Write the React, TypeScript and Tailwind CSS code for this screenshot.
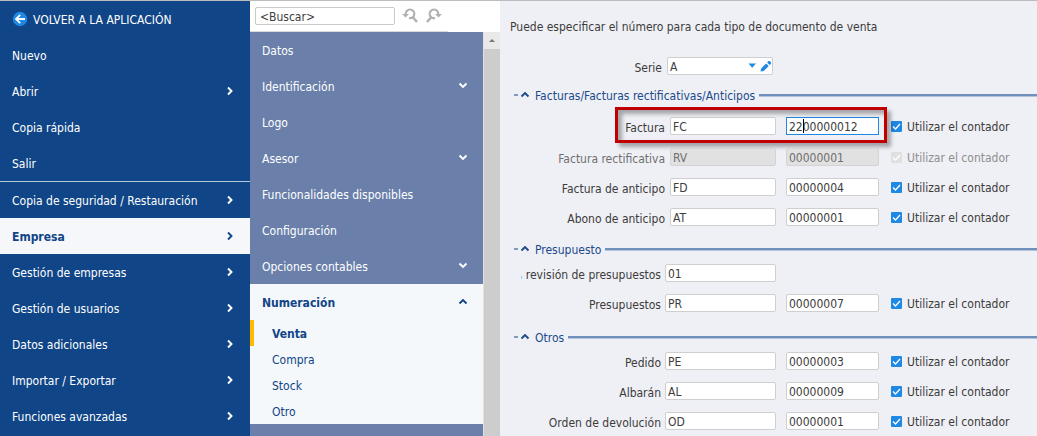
import { ReactNode } from "react";

function Chevron({ dir }: { dir: "right" | "down" | "up" }) {
  const d = {
    right: "M4 1.5 7.5 5 4 8.5",
    down: "M1.5 2.5 5 6 8.5 2.5",
    up: "M1.5 6.5 5 3 8.5 6.5",
  }[dir];
  return (
    <svg viewBox="0 0 10 10" className="h-[10px] w-[10px] shrink-0" fill="none" stroke="currentColor" strokeWidth="1.9" aria-hidden="true">
      <path d={d} />
    </svg>
  );
}

function MainItem({ label, arrow, active }: { label: string; arrow?: boolean; active?: boolean }) {
  return (
    <button
      className={
        active
          ? "flex h-9 w-full items-center justify-between bg-[#f5f7fa] pr-4 pl-3 text-left font-bold text-[#104587]"
          : "flex h-9 w-full items-center justify-between pr-4 pl-3 text-left text-white"
      }
    >
      <span className="pt-[2px]">{label}</span>
      {arrow && <Chevron dir="right" />}
    </button>
  );
}

function SubItem({ label, arrow }: { label: string; arrow?: boolean }) {
  return (
    <button className="flex h-9 w-full items-center justify-between pr-[15px] pl-3 text-left text-white">
      <span className="pt-[2px]">{label}</span>
      {arrow && <Chevron dir="down" />}
    </button>
  );
}

function SearchArrow({ flip, label }: { flip?: boolean; label: string }) {
  return (
    <button aria-label={label} className="h-4 w-4">
      <svg viewBox="0 0 16 16" className={flip ? "h-4 w-4 -scale-x-100" : "h-4 w-4"} fill="none" stroke="#b1b1b1">
        <path d="M3.8 6.5A4.3 4.3 0 1 1 7 10" strokeWidth="2.1" />
        <path d="M0 6H7L3.5 9.6Z" fill="#b1b1b1" stroke="none" />
        <path d="M10.6 9 15 14" strokeWidth="2.6" />
      </svg>
    </button>
  );
}

function Group({ title, children }: { title: string; children: ReactNode }) {
  return (
    <section>
      <button className="flex h-4 w-full items-center text-[#1a4a8c]">
        <span className="h-[2px] w-1 bg-[#7c9abf]" />
        <span className="mx-[2px] flex">
          <Chevron dir="up" />
        </span>
        <span className="mr-1 ml-[3px] pt-[2px] whitespace-nowrap">{title}</span>
        <span className="h-[3px] flex-1 border-b border-[#b4c5da] bg-[#6f90ba]" />
      </button>
      {children}
    </section>
  );
}

type RowProps = {
  label: string;
  code: string;
  number?: string;
  wide?: boolean;
  disabled?: boolean;
  highlight?: boolean;
  cut?: boolean;
};

function Row({ label, code, number, wide, disabled, highlight, cut }: RowProps) {
  const id = label.toLowerCase().replace(/ /g, "-");
  const box = disabled
    ? "h-[18px] rounded-[2px] border border-[#d3d3d3] bg-[#e1e1e1] px-[2px] pt-[2px] leading-[14px] text-[#6f6f6f]"
    : "h-[18px] rounded-[2px] border border-[#cfcfcf] bg-white px-[2px] pt-[2px] leading-[14px]";
  return (
    <div className={"relative flex h-[18px] items-center" + (highlight ? " mb-px" : "")}>
      <label
        htmlFor={id}
        className={(wide ? "w-[147px]" : "w-[151px]") + " shrink-0 pt-1 text-right whitespace-nowrap " + (disabled ? "text-[#6f6f6f]" : "")}
      >
        {cut && <span className="mr-1 inline-block h-[3px] w-px bg-[#8ccbf5]" />}
        {label}
      </label>
      <input
        id={id}
        defaultValue={code}
        disabled={disabled}
        className={box + (wide ? " ml-1 w-[111px]" : " ml-[5px] w-[106px]")}
      />
      {number && (
        <>
          <span className="relative ml-[10px] flex">
            <input
              aria-label={"Contador " + label}
              defaultValue={number}
              disabled={disabled}
              className={highlight ? "h-[18px] w-[93px] border border-[#1e88e5] bg-white px-[2px] pt-[2px] leading-[14px]" : box + " w-[93px]"}
            />
            {highlight && <span className="absolute top-[2px] left-[17px] h-[14px] w-px bg-black" />}
          </span>
          <label className={"ml-3 flex items-center whitespace-nowrap " + (disabled ? "text-[#8e8e8e]" : "")}>
            <span className="relative mr-[5px] flex">
              <input
                type="checkbox"
                defaultChecked
                disabled={disabled}
                className="h-[11px] w-[11px] appearance-none rounded-[1px] bg-[#1e88e5] disabled:bg-[#e0e0e0]"
              />
              <svg viewBox="0 0 11 11" className="pointer-events-none absolute inset-0" fill="none" stroke="white" strokeWidth="1.3">
                <path d="M2 5.5 4.5 8 9 3" />
              </svg>
            </span>
            <span className="pt-[2px]">Utilizar el contador</span>
          </label>
        </>
      )}
      {highlight && (
        <span className="pointer-events-none absolute -top-[10px] left-[101px] h-[36px] w-[272px] border-3 border-[#c00000] shadow-[4px_4px_4px_rgba(0,0,0,0.32),inset_4px_4px_4px_rgba(0,0,0,0.32)]" />
      )}
    </div>
  );
}

export default function App() {
  return (
    <div className="flex h-screen overflow-hidden border-t border-[#bcbcbc] bg-[#eff0f5] font-['DejaVu_Sans_Condensed','Noto_Sans',sans-serif] text-[12px] leading-4 text-[#3c3c3c]">
      <nav className="w-[250px] shrink-0 bg-[#104587]">
        <button className="flex h-9 w-full items-center gap-[5px] pl-3 text-white">
          <svg viewBox="0 0 16 16" className="h-4 w-4" aria-hidden="true">
            <circle cx="8" cy="8" r="7.2" fill="#1e88e5" />
            <path d="M13 8H4.5M8.2 3.8 4 8 8.2 12.2" fill="none" stroke="white" strokeWidth="1.8" />
          </svg>
          <span className="pt-[2px]">VOLVER A LA APLICACIÓN</span>
        </button>
        <MainItem label="Nuevo" />
        <MainItem label="Abrir" arrow />
        <MainItem label="Copia rápida" />
        <MainItem label="Salir" />
        <hr className="border-t border-[#b7c7db]" />
        <MainItem label="Copia de seguridad / Restauración" arrow />
        <MainItem label="Empresa" arrow active />
        <MainItem label="Gestión de empresas" arrow />
        <MainItem label="Gestión de usuarios" arrow />
        <MainItem label="Datos adicionales" arrow />
        <MainItem label="Importar / Exportar" arrow />
        <MainItem label="Funciones avanzadas" arrow />
      </nav>

      <aside className="flex w-[250px] shrink-0 flex-col bg-white">
        <div className="mr-[52px] flex h-[31px] shrink-0 items-center border-b border-[#dadada] pl-[5px]">
          <input
            aria-label="Buscar"
            defaultValue="<Buscar>"
            className="h-[18px] w-[140px] rounded-[2px] border border-[#cacaca] bg-white px-1 pt-[2px] leading-[14px]"
          />
          <span className="ml-[7px] flex gap-2">
            <SearchArrow label="Buscar anterior" />
            <SearchArrow label="Buscar siguiente" flip />
          </span>
        </div>
        <div className="flex min-h-0 flex-1">
          <div className="flex-1 bg-[#6a80ab]">
            <SubItem label="Datos" />
            <SubItem label="Identificación" arrow />
            <SubItem label="Logo" />
            <SubItem label="Asesor" arrow />
            <SubItem label="Funcionalidades disponibles" />
            <SubItem label="Configuración" />
            <SubItem label="Opciones contables" arrow />
            <div className="bg-[#f5f8fa] text-[#104587]">
              <button className="flex h-9 w-full items-center justify-between pr-[15px] pl-3 font-bold">
                <span className="pt-[2px]">Numeración</span>
                <Chevron dir="up" />
              </button>
              <button className="block h-[26px] w-full border-l-4 border-[#ffb900] pt-[2px] pl-[18px] text-left font-bold">Venta</button>
              <button className="block h-[26px] w-full pt-[2px] pl-[22px] text-left">Compra</button>
              <button className="block h-[26px] w-full pt-[2px] pl-[22px] text-left">Stock</button>
              <button className="block h-[26px] w-full pt-[2px] pl-[22px] text-left">Otro</button>
            </div>
          </div>
          <div className="w-[17px] border-l border-[#e2e2e2] bg-[#cdcdcd]">
            <div className="flex h-[17px] items-center justify-center bg-[#e9e9e9]">
              <svg viewBox="0 0 6 3" className="h-[3px] w-[6px]" fill="#777" aria-hidden="true">
                <path d="M0 3 3 0 6 3Z" />
              </svg>
            </div>
          </div>
        </div>
      </aside>

      <main className="min-w-0 flex-1">
        <p className="mt-[18px] pl-[10px]">Puede especificar el número para cada tipo de documento de venta</p>
        <div className="mt-[22px] flex h-[18px] items-center pl-[14px]">
          <label htmlFor="serie" className="w-[148px] pt-1 text-right">Serie</label>
          <div className="relative ml-[5px] h-[18px] w-[106px]">
            <select
              id="serie"
              className="block h-[18px] w-full appearance-none rounded-[2px] border border-[#cfcfcf] bg-white px-[2px] pt-[2px] leading-[14px]"
            >
              <option>A</option>
            </select>
            <svg viewBox="0 0 24 12" className="pointer-events-none absolute top-[3px] right-px h-3 w-6" fill="#1e88e5" aria-hidden="true">
              <path d="M0.5 3.5H8L4.2 7.8Z" />
              <path d="M12.5 11.5 13.2 8.4 18.2 3.4 20.8 6 15.7 11ZM19.1 2.5 20.6 1 21.6 1 23.1 2.6 23.1 3.6 21.6 5.1Z" />
            </svg>
          </div>
        </div>
        <div className="mt-3 pl-[14px]">
          <Group title="Facturas/Facturas rectificativas/Anticipos">
            <div className="mt-[14px] flex flex-col gap-3">
              <Row label="Factura" code="FC" number="2200000012" highlight />
              <Row label="Factura rectificativa" code="RV" number="00000001" disabled />
              <Row label="Factura de anticipo" code="FD" number="00000004" />
              <Row label="Abono de anticipo" code="AT" number="00000001" />
            </div>
          </Group>
        </div>
        <div className="mt-[15px] pl-[14px]">
          <Group title="Presupuesto">
            <div className="mt-[7px] flex flex-col gap-3">
              <Row label="revisión de presupuestos" code="01" wide cut />
              <Row label="Presupuestos" code="PR" number="00000007" wide />
            </div>
          </Group>
        </div>
        <div className="mt-[17px] pl-[14px]">
          <Group title="Otros">
            <div className="mt-[7px] flex flex-col gap-3">
              <Row label="Pedido" code="PE" number="00000003" wide />
              <Row label="Albarán" code="AL" number="00000009" wide />
              <Row label="Orden de devolución" code="OD" number="00000001" wide />
            </div>
          </Group>
        </div>
      </main>
    </div>
  );
}
